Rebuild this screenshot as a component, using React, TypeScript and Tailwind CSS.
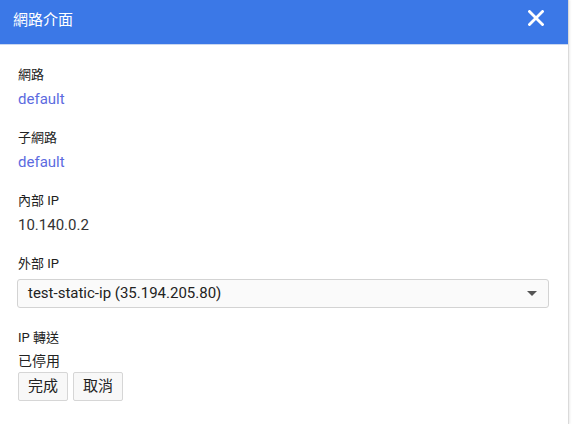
const fieldFont = "font-['Roboto','Noto_Sans_CJK_TC',sans-serif]"

const Field = ({ label, value, link }: { label: string; value: string; link?: boolean }) => (
  <div className="mb-[19px]">
    <div className="text-[13px] leading-5 text-[#212121]">{label}</div>
    <div className={`mt-1 text-[15px] leading-5 ${link ? "text-[#5c6bdf]" : "text-[#333]"}`}>{value}</div>
  </div>
)

export default function App() {
  return (
    <div className={`w-[581px] h-[424px] bg-white ${fieldFont}`}>
      <div className="w-[569px] h-full border-r border-[#dadada] shadow-[1px_0_2px_rgba(0,0,0,0.08)] flex flex-col">
        {/* Header */}
        <div className="h-[45px] bg-[#3b78e7] border-b border-[#c9d7f0] flex justify-between pl-[13px] pr-[24px]">
          <span className="text-white text-[15px] leading-5 mt-[10px]">網路介面</span>
          <svg width="16" height="16" viewBox="0 0 16 16" className="mt-[10px]">
            <path d="M1.5 1.5L14.5 14.5M14.5 1.5L1.5 14.5" stroke="white" strokeWidth="2.8" strokeLinecap="square" />
          </svg>
        </div>

        {/* Body */}
        <div className="pl-[18px] pr-[19px] pt-[20px]">
          <Field label="網路" value="default" link />
          <Field label="子網路" value="default" link />
          <Field label="內部 IP" value="10.140.0.2" />

          <div className="mb-[20px]">
            <div className="text-[13px] leading-5 text-[#212121]">外部 IP</div>
            <div className="mt-[5px] -ml-px h-[29px] border border-[#d3d3d3] rounded-[3px] bg-[#fafafa] flex items-center justify-between pl-[10px] pr-[11px]">
              <span className="text-[15px] text-[#222]">test-static-ip (35.194.205.80)</span>
              <span className="w-0 h-0 border-l-[5px] border-r-[5px] border-t-[5px] border-l-transparent border-r-transparent border-t-[#555]" />
            </div>
          </div>

          <div className="text-[13px] leading-5 text-[#212121]">IP 轉送</div>
          <div className="mt-[3px] text-[14px] leading-5 text-[#222]">已停用</div>
          <div className="mt-[1px] flex gap-[5px]">
            <button className="w-[50px] h-[29px] border border-[#d6d6d6] rounded-[2px] bg-[#f8f8f8] text-[15px] text-[#222]">完成</button>
            <button className="w-[50px] h-[29px] border border-[#d6d6d6] rounded-[2px] bg-[#f8f8f8] text-[15px] text-[#222]">取消</button>
          </div>
        </div>
      </div>
    </div>
  )
}
